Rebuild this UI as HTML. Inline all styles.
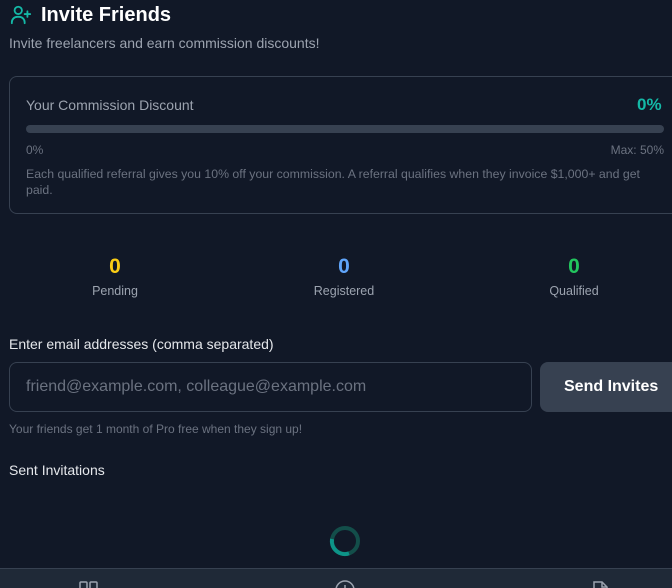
<!DOCTYPE html>
<html><head><meta charset="utf-8"><style>
*{box-sizing:border-box;margin:0;padding:0}
html,body{width:672px;height:588px;overflow:hidden}
body{background:#111827;font-family:"Liberation Sans",sans-serif;position:relative;color:#e5e7eb}
.abs{position:absolute}
</style></head><body>
<svg class="abs" style="left:10px;top:4px" width="22" height="22" viewBox="0 0 24 24" fill="none" stroke="#14b8a6" stroke-width="2" stroke-linecap="round"><circle cx="9" cy="7" r="4"/><path d="M2 21v-1a6 6 0 0 1 6-6h2a6 6 0 0 1 6 6v1"/><path d="M19 8v6M16 11h6"/></svg>
<div class="abs" style="left:41px;top:4px;font-size:20px;font-weight:bold;color:#fff">Invite Friends</div>
<div class="abs" style="left:9px;top:35px;font-size:14px;color:#9ca3af">Invite freelancers and earn commission discounts!</div>
<div class="abs" style="left:9px;top:76px;width:680px;height:138px;border:1px solid #374151;border-radius:8px"></div>
<div class="abs" style="left:26px;top:97px;font-size:14px;color:#9ca3af">Your Commission Discount</div>
<div class="abs" style="left:637px;top:95px;font-size:17px;font-weight:bold;color:#14b8a6">0%</div>
<div class="abs" style="left:26px;top:125px;width:638px;height:8px;border-radius:4px;background:#374151"></div>
<div class="abs" style="left:26px;top:143px;font-size:12px;color:#6b7280">0%</div>
<div class="abs" style="left:564px;width:100px;text-align:right;top:143px;font-size:12px;color:#6b7280">Max: 50%</div>
<div class="abs" style="left:26px;top:166px;width:640px;font-size:12.3px;line-height:16px;color:#6b7280">Each qualified referral gives you 10% off your commission. A referral qualifies when they invoice $1,000+ and get paid.</div>
<div class="abs" style="left:65px;top:255px;width:100px;text-align:center"><div style="font-size:21px;font-weight:bold;color:#facc15">0</div><div style="font-size:12.5px;color:#9ca3af;margin-top:5px">Pending</div></div>
<div class="abs" style="left:294px;top:255px;width:100px;text-align:center"><div style="font-size:21px;font-weight:bold;color:#60a5fa">0</div><div style="font-size:12.5px;color:#9ca3af;margin-top:5px">Registered</div></div>
<div class="abs" style="left:524px;top:255px;width:100px;text-align:center"><div style="font-size:21px;font-weight:bold;color:#22c55e">0</div><div style="font-size:12.5px;color:#9ca3af;margin-top:5px">Qualified</div></div>
<div class="abs" style="left:9px;top:336px;font-size:14px;color:#e5e7eb">Enter email addresses (comma separated)</div>
<div class="abs" style="left:9px;top:362px;width:523px;height:50px;border:1px solid #374151;border-radius:8px"></div>
<div class="abs" style="left:26px;top:378px;font-size:16px;color:#6b7280">friend@example.com, colleague@example.com</div>
<div class="abs" style="left:540px;top:362px;width:150px;height:50px;border-radius:8px;background:#374151"></div>
<div class="abs" style="left:564px;top:378px;font-size:16px;font-weight:bold;color:#fff">Send Invites</div>
<div class="abs" style="left:9px;top:422px;font-size:12px;color:#6b7280">Your friends get 1 month of Pro free when they sign up!</div>
<div class="abs" style="left:9px;top:462px;font-size:14px;color:#e5e7eb">Sent Invitations</div>
<svg class="abs" style="left:328px;top:524px" width="34" height="34" viewBox="0 0 34 34"><circle cx="17" cy="17" r="13" fill="none" stroke="#134e4a" stroke-width="4"/><path d="M4 15A13 13 0 0 0 21 29.4" fill="none" stroke="#0d9488" stroke-width="4"/></svg>
<div class="abs" style="left:0;top:568px;width:672px;height:20px;background:#1f2937;border-top:1px solid #374151"></div>
<svg class="abs" style="left:79px;top:581px" width="20" height="7" viewBox="0 0 20 7" fill="none" stroke="#9ca3af" stroke-width="1.5"><rect x="1" y="1" width="7" height="10" rx="1"/><rect x="11" y="1" width="7" height="10" rx="1"/></svg>
<svg class="abs" style="left:334px;top:580px" width="22" height="8" viewBox="0 0 22 8" fill="none" stroke="#9ca3af" stroke-width="1.5"><circle cx="11" cy="10" r="9"/><path d="M11 5v5"/></svg>
<svg class="abs" style="left:591px;top:580px" width="20" height="8" viewBox="0 0 20 8" fill="none" stroke="#9ca3af" stroke-width="1.5"><path d="M3 10V2h8l5 5v3"/><path d="M11 2v5h5"/></svg>
</body></html>
